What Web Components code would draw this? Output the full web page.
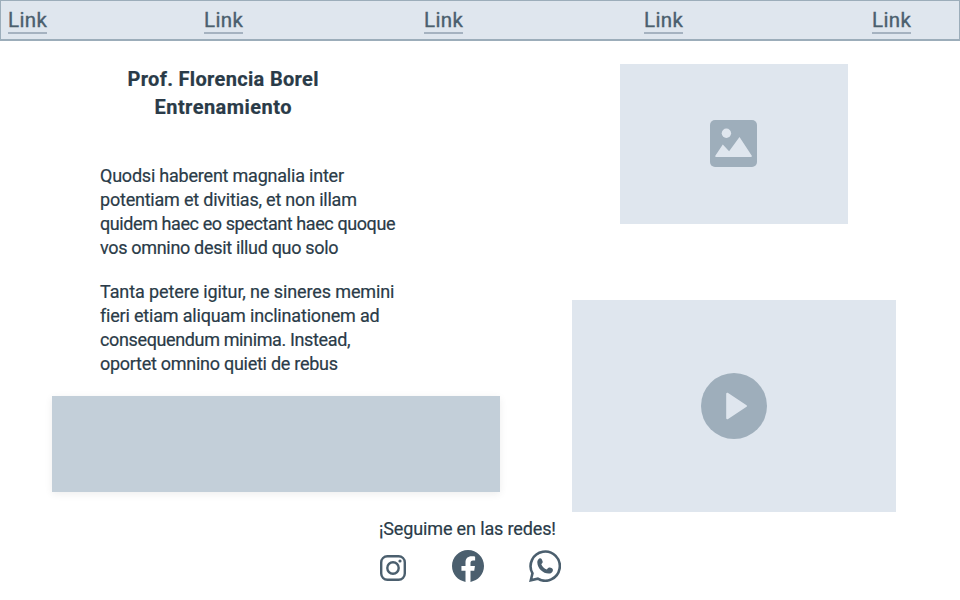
<!DOCTYPE html>
<html lang="es"><head><meta charset="utf-8"><title>Prof. Florencia Borel</title>
<style>body{margin:0;background:#fff;font-family:Roboto,"Noto Sans",sans-serif;color:#2a3b48}</style></head>
<body><trainer-page></trainer-page>
<script>
const define=(name,html)=>customElements.define(name,class extends HTMLElement{
  constructor(){super();this.attachShadow({mode:'open'}).innerHTML=html;}
});

/* One line of text, tracked out to the measure given in the "measure" attribute. */
customElements.define('text-line',class extends HTMLElement{
  constructor(){super();this.attachShadow({mode:'open'}).innerHTML=
    '<style>:host{display:block;white-space:nowrap}span{display:inline-block}</style><span></span>';}
  connectedCallback(){
    const s=this.shadowRoot.querySelector('span'),t=this.getAttribute('text');
    s.textContent=t;
    const m=+this.getAttribute('measure'),gap=(m-s.getBoundingClientRect().width)/(t.length-1);
    s.style.letterSpacing=gap+'px';
    s.style.marginRight=-gap+'px';
  }
});

define('nav-link',`<style>:host{display:block;font-size:20.5px;line-height:24px;font-weight:400;-webkit-text-stroke:.35px currentColor;color:#4b5f6e}
a{display:block;width:39px;height:24px;border-bottom:2px solid #a5b2c0;color:inherit;text-decoration:none}</style>
<a><text-line text="Link" measure="39"></text-line></a>`);

define('nav-bar',`<style>:host{display:grid;box-sizing:border-box;height:41px;grid-template-columns:196px 220px 220px 228px auto;
padding:7px 0 0 7px;background:#dfe6ee;border:1px solid #9cadba;border-bottom-width:2px}</style><slot></slot>`);

define('page-title',`<style>:host{display:block}h1{margin:0;display:flex;flex-direction:column;align-items:center;font-size:20px;line-height:28px;font-weight:700;-webkit-text-stroke:.2px currentColor}</style><h1><slot></slot></h1>`);
define('text-block',`<style>:host{display:block;font-size:18px;line-height:24px;-webkit-text-stroke:.2px currentColor}p{margin:0}</style><p><slot></slot></p>`);
define('accent-panel',`<style>:host{display:block;height:96px;background:#c3cfd9;box-shadow:0 2px 8px rgba(0,0,0,.07)}</style>`);
define('media-frame',`<style>:host{display:flex;box-sizing:border-box;align-items:center;justify-content:center;background:#dfe6ee}</style><slot></slot>`);

define('image-icon',`<style>:host,svg{display:block}</style><svg width="47" height="47" viewBox="0 0 47 47">
<rect width="47" height="47" rx="5" fill="#9eaebb"/><circle cx="16.4" cy="13.2" r="4.7" fill="#dfe6ee"/>
<path d="M5.3 35.8 12.8 24.5 19.1 31.3 29.5 17.1 41.8 35.8Q42 37 41 37H6Q5 37 5.3 35.8Z" fill="#dfe6ee"/></svg>`);
define('play-icon',`<style>:host,svg{display:block}</style><svg width="66" height="66" viewBox="0 0 66 66">
<circle cx="33" cy="33" r="33" fill="#9eaebb"/><path d="M26.2 20.7V45.3L45 33Z" fill="#dfe6ee" stroke="#dfe6ee" stroke-width="2" stroke-linejoin="round"/></svg>`);
define('instagram-icon',`<style>:host,svg{display:block}</style><svg width="28" height="28" viewBox="0 0 28 28">
<g fill="none" stroke="#4b5f6e" stroke-width="2.4"><rect x="2.2" y="2.2" width="23.6" height="23.6" rx="6.2"/><circle cx="14" cy="14" r="5.7"/></g><circle cx="21" cy="7" r="1.6" fill="#4b5f6e"/></svg>`);
define('facebook-icon',`<style>:host,svg{display:block}</style><svg width="32" height="32" viewBox="0 0 24 24"><path fill="#4b5f6e" d="M24 12.073c0-6.627-5.373-12-12-12s-12 5.373-12 12c0 5.99 4.388 10.954 10.125 11.854v-8.385H7.078v-3.47h3.047V9.43c0-3.007 1.792-4.669 4.533-4.669 1.312 0 2.686.235 2.686.235v2.953H15.83c-1.491 0-1.956.925-1.956 1.874v2.25h3.328l-.532 3.47h-2.796v8.385C19.612 23.027 24 18.062 24 12.073z"/></svg>`);
define('whatsapp-icon',`<style>:host,svg{display:block}</style><svg width="32" height="32" viewBox="0 0 32 32">
<path fill="none" stroke="#4b5f6e" stroke-width="2.6" d="M1.8 30.3 3.5 23.3A14.6 14.6 0 1 1 8.8 28.7Z"/>
<path fill="#4b5f6e" d="M10.3 8.4C9 9.3 8.2 10.8 8.3 12.5 8.6 18.6 14 23.4 19.6 23.6 21.8 23.7 23.6 22.5 23.9 20.4 24 19.3 23.6 18.7 22.5 18.1L20.9 17.5C20.1 17.2 19.5 17.5 19 18.1L17.9 19.5C15.2 18.5 13.4 16.6 12.3 14.2L13.3 13.1C13.8 12.5 13.9 11.9 13.6 11.2L12.6 9.1C12.1 8.1 11.2 7.9 10.3 8.4Z"/></svg>`);

define('social-footer',`<style>:host{display:block;width:182px;margin:5px auto 0 379px;font-size:18px;line-height:24px;-webkit-text-stroke:.2px currentColor}
div{display:flex;justify-content:space-between;align-items:flex-start;margin-top:9px}instagram-icon{margin-top:4px}</style>
<text-line text="¡Seguime en las redes!" measure="177"></text-line>
<div><instagram-icon></instagram-icon><facebook-icon></facebook-icon><whatsapp-icon></whatsapp-icon></div>`);

define('trainer-page',`<style>:host{display:block;width:960px;height:600px;overflow:hidden}
main{display:grid;grid-template-columns:448px 324px;column-gap:72px;padding:23px 64px 0 52px;height:448px}
page-title{width:342px;margin-top:1px}.copy{padding:43px 0 0 48px;display:grid;gap:20px}
accent-panel{margin-top:20px}.image{width:228px;height:160px;margin-left:48px;padding:0 1px 1px 0}.video{height:212px;margin-top:76px}</style>
<nav-bar>${'<nav-link></nav-link>'.repeat(5)}</nav-bar>
<main><section><page-title><text-line text="Prof. Florencia Borel" measure="191"></text-line><text-line text="Entrenamiento" measure="137"></text-line></page-title>
<div class="copy"><text-block><text-line text="Quodsi haberent magnalia inter" measure="244"></text-line><text-line text="potentiam et divitias, et non illam" measure="257"></text-line><text-line text="quidem haec eo spectant haec quoque" measure="295.5"></text-line><text-line text="vos omnino desit illud quo solo" measure="238.5"></text-line></text-block>
<text-block><text-line text="Tanta petere igitur, ne sineres memini" measure="294.5"></text-line><text-line text="fieri etiam aliquam inclinationem ad" measure="279"></text-line><text-line text="consequendum minima. Instead," measure="250.5"></text-line><text-line text="oportet omnino quieti de rebus" measure="238"></text-line></text-block></div>
<accent-panel></accent-panel></section>
<section><media-frame class="image"><image-icon></image-icon></media-frame><media-frame class="video"><play-icon></play-icon></media-frame></section></main>
<social-footer></social-footer>`);
</script></body></html>
